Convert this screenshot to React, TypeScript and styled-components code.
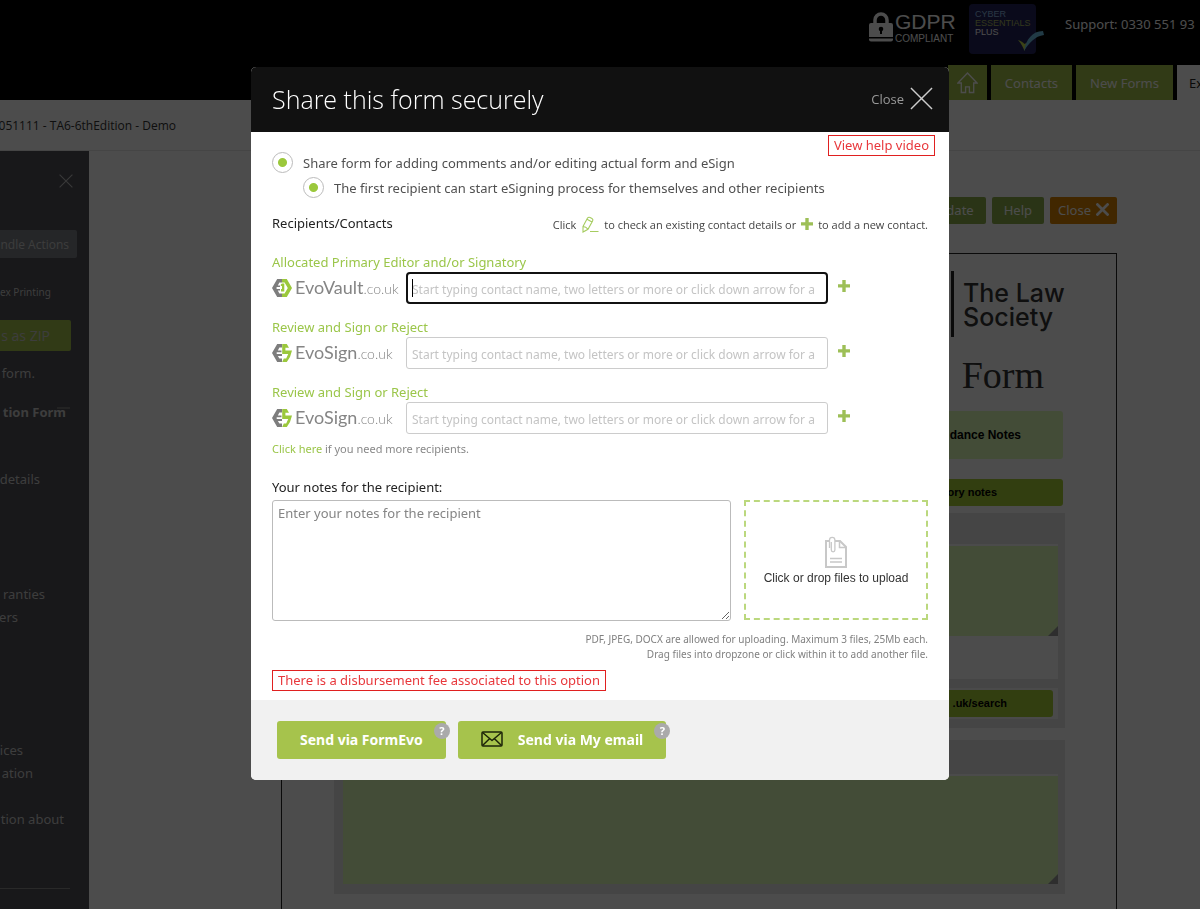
import React from "react";
import styled, { createGlobalStyle, css } from "styled-components";

const green = "#a6c34c";
const arial = '"Liberation Sans", Arial, sans-serif';
const openSans = '"Open Sans", "Noto Sans", sans-serif';

const GlobalStyle = createGlobalStyle`
  *, *::before, *::after { box-sizing: border-box; }
  body { margin: 0; background: #fff; font-family: "Noto Sans", "Open Sans", sans-serif; font-size: 13px; color: #505050; }
  button, input, textarea { font-family: inherit; }
  button { cursor: pointer; }
  a { text-decoration: none; }
`;

/* ---------- Page behind the dialog ---------- */

const Page = styled.div`
  height: 100vh;
  overflow: hidden;
  display: flex;
  flex-direction: column;
`;

const TopBar = styled.header`
  flex: none;
  height: 100px;
  background: #000;
  display: flex;
  flex-direction: column;
  justify-content: space-between;
`;

const BadgeRow = styled.div`
  display: flex;
  justify-content: flex-end;
  align-items: flex-start;
  padding-top: 4px;
`;

const Gdpr = styled.div`
  display: flex;
  align-items: center;
  gap: 2px;
  width: 100px;
  height: 46px;
  color: #fff;
  font-family: ${arial};
`;

const GdprText = styled.div`
  font-size: 21px;
  line-height: 23px;
`;

const GdprSub = styled.div`
  font-size: 10px;
  line-height: 11px;
`;

const Cyber = styled.div`
  position: relative;
  width: 67px;
  height: 50px;
  margin-right: 29px;
  padding: 6px;
  border-radius: 4px;
  background: #24245c;
  font: 9px/9px ${arial};
  white-space: nowrap;
  svg { position: absolute; right: -8px; bottom: 2px; }
`;

const CyberLine = styled.div<{ $color: string }>`
  color: ${(p) => p.$color};
`;

const Support = styled.div`
  width: 135px;
  overflow: hidden;
  white-space: nowrap;
  line-height: 40px;
  color: #fff;
`;

const Nav = styled.nav`
  display: flex;
  justify-content: flex-end;
  gap: 4px;
`;

const Tab = styled.a<{ $active?: boolean }>`
  display: flex;
  align-items: center;
  height: 35px;
  padding: 0 14px;
  white-space: nowrap;
  background: ${green};
  color: #fff;
  ${(p) => p.$active && css`width: 23px; padding: 0 0 0 12px; overflow: hidden; background: #fff; color: #222;`}
`;

const HomeTab = styled(Tab)`
  padding: 0 9px;
`;

const CrumbBar = styled.div`
  flex: none;
  height: 51px;
  border-bottom: 1px solid #e8e8e8;
`;

const Crumb = styled.div`
  display: flex;
  justify-content: flex-end;
  width: 176px;
  overflow: hidden;
  white-space: nowrap;
  font-family: ${openSans};
  font-size: 12px;
  line-height: 51px;
  color: #333;
`;

const Columns = styled.div`
  flex: 1;
  min-height: 0;
  display: flex;
`;

const Sidebar = styled.aside`
  flex: none;
  width: 89px;
  background: #505057;
  color: #ccc;
  overflow: hidden;
  white-space: nowrap;
  display: flex;
  flex-direction: column;
  align-items: flex-start;
`;

const SideClose = styled.button`
  margin: 23px 0 0 59px;
  padding: 0;
  border: 0;
  background: none;
  height: 16px;
`;

const SideButton = styled.button<{ $green?: boolean }>`
  border: 0;
  border-radius: 0 2px 2px 0;
  padding: 0 8px 0 0;
  color: #ccc;
  text-align: right;
  font-family: ${openSans};
  ${(p) =>
    p.$green
      ? css`width: 71px; height: 31px; padding-right: 21px; font-size: 14px; background: ${green};`
      : css`width: 77px; height: 28px; margin-top: 40px; font-size: 12px; background: #7d8187;`}
`;

const SideSmall = styled.div`
  font-size: 10px;
  line-height: 20px;
  margin: 24px 0 18px;
`;

const SideText = styled.div<{ $end: number; $gap?: number; $bold?: boolean }>`
  display: flex;
  justify-content: flex-end;
  width: ${(p) => p.$end}px;
  line-height: 23px;
  margin-top: ${(p) => p.$gap || 0}px;
  font-weight: ${(p) => (p.$bold ? 700 : 400)};
`;

const Minus = styled.span`
  position: absolute;
  left: 57px;
  top: 407px;
  width: 13px;
  height: 2px;
  background: #777;
`;

const SideRule = styled.hr`
  width: 70px;
  margin: 57px 0 8px;
  border: 0;
  border-top: 1px solid #8a8a8a;
`;

const Content = styled.main`
  flex: 1;
  min-width: 0;
  padding: 46px 83px 0 192px;
`;

const Tools = styled.div`
  display: flex;
  justify-content: flex-end;
  gap: 6px;
  margin-bottom: 29px;
`;

const Tool = styled.button<{ $warn?: boolean }>`
  display: flex;
  align-items: center;
  gap: 5px;
  height: 27px;
  padding: 0 ${(p) => (p.$warn ? 8 : 12)}px 2px;
  border: 0;
  border-radius: 2px;
  font-size: 13px;
  color: #fff;
  background: ${(p) => (p.$warn ? "#d98200" : "#8db04c")};
`;

const Sheet = styled.section`
  min-height: 900px;
  padding: 17px 51px 0 52px;
  border: 1px solid #222;
`;

const Society = styled.div`
  display: flex;
  justify-content: flex-end;
`;

const SocietyName = styled.div`
  width: 114px;
  padding: 10px 0 8px 9px;
  border-left: 3px solid #222;
  font: 500 25px/24px Inter, Lato, sans-serif;
  white-space: nowrap;
  color: #333;
`;

const FormTitle = styled.h2`
  margin: 13px 21px 11px 0;
  text-align: right;
  font: 400 38px/50px "Liberation Serif", serif;
  color: #333;
`;

const Guidance = styled.div`
  margin: 0 2px 20px 0;
  padding-right: 42px;
  border-radius: 3px;
  background: #dffdba;
  text-align: right;
  font: 700 12px/48px ${arial};
  color: #000;
`;

const GreenBar = styled.div<{ $pad: number }>`
  margin-right: 2px;
  padding-right: ${(p) => p.$pad}px;
  border-radius: 3px;
  background: #a9d038;
  text-align: right;
  font: 700 11px/27px ${arial};
  color: #000;
`;

const Panel = styled.div<{ $last?: boolean }>`
  margin-top: ${(p) => (p.$last ? 12 : 7)}px;
  padding: ${(p) => (p.$last ? "34px 7px 10px 9px" : "31px 7px 9px 9px")};
  background: #e6e6e6;
`;

const Field = styled.div<{ $h: number }>`
  position: relative;
  height: ${(p) => p.$h}px;
  border-top: 2px solid #fbfbfb;
  textarea {
    display: block;
    width: 100%;
    height: 100%;
    border: 0;
    resize: none;
    background: #dffdba;
  }
  &::after {
    content: "";
    position: absolute;
    right: 0;
    bottom: 0;
    border: 5px solid transparent;
    border-right-color: #999;
    border-bottom-color: #999;
  }
`;

const Blank = styled.div`
  height: 43px;
  margin-bottom: 9px;
  background: #fff;
`;

const LinkBox = styled.div`
  padding: 2px 3px;
  background: #f8f8f8;
`;

/* ---------- Dialog ---------- */

const Overlay = styled.div`
  position: fixed;
  inset: 0;
  padding: 67px 16px 0;
  display: flex;
  justify-content: center;
  align-items: flex-start;
  background: rgba(0, 0, 0, 0.7);
`;

const Dialog = styled.section`
  width: 100%;
  max-width: 698px;
  border-radius: 5px;
  overflow: hidden;
  background: #fff;
`;

const DialogHead = styled.header`
  display: flex;
  justify-content: space-between;
  align-items: center;
  height: 65px;
  padding: 0 16px 2px 21px;
  background: #111;
`;

const Title = styled.h1`
  margin: 0;
  font-family: ${openSans};
  font-size: 25px;
  font-weight: 300;
  color: #fff;
`;

const CloseButton = styled.button`
  display: flex;
  align-items: center;
  gap: 6px;
  padding: 0;
  border: 0;
  background: none;
  font-family: ${openSans};
  font-size: 13px;
  color: #999;
`;

const Body = styled.div`
  padding: 3px 21px 9px;
`;

const OptionRow = styled.div`
  display: flex;
  justify-content: space-between;
  align-items: flex-start;
  margin-right: -7px;
`;

const Boxed = styled.span`
  display: inline-block;
  padding: 0 5px;
  border: 1px solid #e02020;
  font-size: 13px;
  line-height: 19px;
  color: #e8383c;
`;

const Option = styled.label<{ $nested?: boolean }>`
  display: flex;
  align-items: center;
  gap: 10px;
  height: 21px;
  margin: ${(p) => (p.$nested ? "4px 0 0 31px" : "17px 0 0")};
  input {
    appearance: none;
    flex: none;
    width: 21px;
    height: 21px;
    margin: 0;
    border: 1px solid #bbb;
    border-radius: 50%;
    background: radial-gradient(circle, #9bc83c 4px, #fff 5px);
  }
`;

const ContactsHead = styled.div`
  display: flex;
  justify-content: space-between;
  align-items: center;
  height: 20px;
  margin: 15px 0 20px;
  color: #222;
`;

const Hint = styled.span`
  display: flex;
  align-items: center;
  gap: 5px;
  padding-top: 2px;
  font-family: ${openSans};
  font-size: 11px;
  color: #444;
`;

const Recipient = styled.div`
  margin-bottom: 14px;
`;

const RecipientLabel = styled.label`
  display: block;
  line-height: 19px;
  color: #9bc64a;
`;

const RecipientRow = styled.div`
  display: grid;
  grid-template-columns: 126px minmax(0, 422px) 14px;
  column-gap: 8px;
  align-items: center;
`;

const Brand = styled.span`
  display: flex;
  align-items: center;
  gap: 3px;
  white-space: nowrap;
  svg { flex: none; }
`;

const BrandName = styled.span`
  font: 400 18px/24px Lato, sans-serif;
  color: #858585;
  small { font-size: 14px; font-weight: 300; }
`;

const InputWrap = styled.span<{ $active?: boolean }>`
  position: relative;
  display: block;
  height: 32px;
  ${(p) =>
    p.$active &&
    css`
      &::before {
        content: "";
        position: absolute;
        left: 6px;
        top: 7px;
        width: 1px;
        height: 18px;
        background: #000;
      }
      input { outline: 2px solid #111; outline-offset: -2px; border-radius: 4px; }
    `}
`;

const TextInput = styled.input`
  display: block;
  width: 100%;
  height: 32px;
  padding: 2px 2px 0 5px;
  border: 1px solid #ccc;
  border-radius: 3px;
  font-size: 12px;
  color: #333;
  &::placeholder { color: #c4c4c4; opacity: 1; }
`;

const AddButton = styled.button`
  display: flex;
  padding: 0 0 4px 2px;
  border: 0;
  background: none;
`;

const More = styled.p`
  margin: -7px 0 21px;
  font-size: 11px;
  line-height: 16px;
  color: #888;
  a { color: #9bc64a; }
`;

const NotesLabel = styled.label`
  display: block;
  line-height: 18px;
  margin-bottom: 4px;
  color: #222;
`;

const NotesRow = styled.div`
  display: grid;
  grid-template-columns: minmax(0, 1fr) 184px;
  column-gap: 13px;
`;

const Notes = styled.textarea`
  display: block;
  width: 100%;
  height: 121px;
  padding: 3px 5px;
  border: 1px solid #bbb;
  border-radius: 3px;
  font-size: 13px;
  &::placeholder { color: #858585; opacity: 1; }
`;

const Drop = styled.button`
  display: flex;
  flex-direction: column;
  align-items: center;
  justify-content: center;
  gap: 1px;
  height: 120px;
  padding: 8px 0 6px;
  border: 2px dashed #bbd87e;
  background: #fff;
  font: 12px/18px ${arial};
  color: #333;
`;

const Rules = styled.p`
  margin: 11px 0 8px;
  text-align: right;
  font-size: 10px;
  line-height: 15px;
  color: #808080;
`;

const Foot = styled.footer`
  display: flex;
  gap: 12px;
  height: 80px;
  padding: 21px 26px;
  background: #f1f1f1;
`;

const Send = styled.button`
  position: relative;
  display: flex;
  align-items: center;
  gap: 15px;
  height: 38px;
  padding: 0 23px 2px;
  border: 0;
  border-radius: 3px;
  background: ${green};
  font-size: 14px;
  font-weight: 700;
  color: #fff;
`;

const Tip = styled.span`
  position: absolute;
  top: 2px;
  right: -4px;
  width: 16px;
  height: 16px;
  border-radius: 50%;
  background: #aaa;
  font-size: 11px;
  line-height: 16px;
  text-align: center;
`;

/* ---------- Drawings ---------- */

const Cross = ({ size, color, width }: { size: number; color: string; width: number }) => (
  <svg width={size} height={size} viewBox="0 0 24 24" fill="none" stroke={color} strokeWidth={width}>
    <path d="M1 1 23 23M23 1 1 23" />
  </svg>
);

const Plus = () => (
  <svg width="12" height="12" viewBox="0 0 12 12" fill="#9dbf57">
    <path d="M4.300 0h3.400v4.300H12v3.200H7.700V12H4.300V7.500H0V4.300h4.300z" />
  </svg>
);

const Pencil = () => (
  <svg width="18" height="17" viewBox="0 0 18 17" fill="none" stroke="#a6cc60" strokeWidth="1.100">
    <path d="M2 10.500 6.500 2Q7.500.8 9 1.400l2 1.100q1.400 1 .7 2.300L7 13.300 2 16zM2 10.500q3 0 5 2.800M6 3.200l5 2.800" />
    <path d="M9 15.500h8.500" />
  </svg>
);

const HexVault = () => (
  <svg width="20" height="20" viewBox="0 0 20 20">
    <path fill="#7d7d7d" d="M5.200 1H10v3.600H7.400L5.800 7.400H8V9H4.600v2H8v1.600H5.800l1.600 2.800H10V19H5.200L0 10z" />
    <path fill="#9bc83c" d="M10 1h4.800L20 10l-5.200 9H10v-3.600h2.600l3.200-5.400-3.200-5.400H10z" />
    <path fill="#9bc83c" d="M8.800 6.500 10 5.500h2.300v8H9V11h1V8H8.800z" />
  </svg>
);

const HexSign = () => (
  <svg width="20" height="20" viewBox="0 0 20 20">
    <path fill="#7d7d7d" d="M5.200 1H10v3.600H7.400L5.800 7.600H9.500v1.600H4.700v1.800H10v2H5.900l1.500 2.500H10V19H5.200L0 10z" />
    <path fill="#9bc83c" d="M10.200 1h4.600l2.200 3.800h-3.600v2.800H20l-2 6.400-3.200 5h-4.600l1.600-3.600h2.400l2-4.400h-6z" />
  </svg>
);

const Doc = () => (
  <svg width="22" height="32" viewBox="0 0 22 32" fill="none" stroke="#c8c8c8" strokeWidth="2">
    <path d="M10 5h5l6 6v20H1V5h3" />
    <path d="M14.500 5v6.500H21" strokeWidth="1.500" />
    <path d="M4.500 12V4a2.700 2.700 0 0 1 5.400 0v10a1.800 1.800 0 0 1-3.600 0V6" strokeWidth="1.300" />
    <path d="M5 22.500h12M5 26h12" strokeWidth="1.500" />
  </svg>
);

const Envelope = () => (
  <svg width="22" height="16" viewBox="0 0 22 16" fill="none" stroke="#1c2408" strokeWidth="1.500" strokeLinejoin="round">
    <rect x="1" y="1" width="20" height="14" rx="1" />
    <path d="m1.500 1.500 9.500 8 9.500-8M1.500 14.500l7-6.800M20.500 14.500l-7-6.800" />
  </svg>
);

const Lock = () => (
  <svg width="24" height="30" viewBox="0 0 24 30" fill="none">
    <path d="M6 12V8a6 6 0 0 1 12 0v4" stroke="#fff" strokeWidth="3.500" />
    <path d="M2 11h20a2 2 0 0 1 2 2v12H0V13a2 2 0 0 1 2-2z" fill="#fff" />
    <path d="M0 26.500h24v1a2 2 0 0 1-2 2H2a2 2 0 0 1-2-2z" fill="#fff" />
    <circle cx="12" cy="17" r="2.300" fill="#000" />
    <path d="M11 17h2v5h-2z" fill="#000" />
  </svg>
);

const Tick = () => (
  <svg width="26" height="22" viewBox="0 0 26 22">
    <path fill="#c5dc4c" d="M0 10c3 1 5 2 6.500 4L9 12.500 6.500 21C5 17 3 13 0 10z" />
    <path fill="#6fc4e8" d="M6 21C8 10 14 1 25 1l1 4C17 6 11 13 6 21z" />
  </svg>
);

const Home = () => (
  <svg width="21" height="23" viewBox="0 0 22 23" fill="none" stroke="#fff" strokeWidth="1.400">
    <path d="M1 12 11 1.500 21 12h-3.500v10H13v-6H9v6H4.500V12z" />
  </svg>
);

/* ---------- Data ---------- */

const recipients = [
  { id: "editor", label: "Allocated Primary Editor and/or Signatory", brand: "EvoVault", active: true },
  { id: "signer-one", label: "Review and Sign or Reject", brand: "EvoSign", active: false },
  { id: "signer-two", label: "Review and Sign or Reject", brand: "EvoSign", active: false },
];

const Backdrop = () => (
  <Page>
    <TopBar>
      <BadgeRow>
        <Gdpr>
          <Lock />
          <div>
            <GdprText>GDPR</GdprText>
            <GdprSub>COMPLIANT</GdprSub>
          </div>
        </Gdpr>
        <Cyber>
          <CyberLine $color="#8fb8e0">CYBER</CyberLine>
          <CyberLine $color="#a9b860">ESSENTIALS</CyberLine>
          <CyberLine $color="#ffffff">PLUS</CyberLine>
          <Tick />
        </Cyber>
        <Support>Support: 0330 551 93</Support>
      </BadgeRow>
      <Nav>
        <HomeTab href="#home" aria-label="Home"><Home /></HomeTab>
        <Tab href="#contacts">Contacts</Tab>
        <Tab href="#new">New Forms</Tab>
        <Tab href="#existing" $active>Ex</Tab>
      </Nav>
    </TopBar>
    <CrumbBar>
      <Crumb>051111 - TA6-6thEdition - Demo</Crumb>
    </CrumbBar>
    <Columns>
      <Sidebar>
        <SideClose aria-label="Close panel"><Cross size={14} color="#bbb" width={2} /></SideClose>
        <SideButton>ndle Actions</SideButton>
        <SideSmall>ex Printing</SideSmall>
        <SideButton $green>s as ZIP</SideButton>
        <SideText $end={35} $gap={11}>form.</SideText>
        <SideText $end={66} $gap={16} $bold>tion Form</SideText>
        <Minus />
        <SideText $end={40} $gap={44}>details</SideText>
        <SideText $end={45} $gap={92}>ranties</SideText>
        <SideText $end={18}>ers</SideText>
        <SideText $end={23} $gap={110}>ices</SideText>
        <SideText $end={33}>ation</SideText>
        <SideText $end={64} $gap={23}>tion about</SideText>
        <SideRule />
      </Sidebar>
      <Content>
        <Tools>
          <Tool>date</Tool>
          <Tool>Help</Tool>
          <Tool $warn>Close <Cross size={13} color="#fff" width={5} /></Tool>
        </Tools>
        <Sheet>
          <Society>
            <SocietyName>The Law<br />Society</SocietyName>
          </Society>
          <FormTitle>Form</FormTitle>
          <Guidance>dance Notes</Guidance>
          <GreenBar $pad={66}>ory notes</GreenBar>
          <Panel>
            <Field $h={92}><textarea aria-label="Property address" readOnly /></Field>
            <Blank />
            <LinkBox><GreenBar $pad={46}>.uk/search</GreenBar></LinkBox>
          </Panel>
          <Panel $last>
            <Field $h={110}><textarea aria-label="Seller names" readOnly /></Field>
          </Panel>
        </Sheet>
      </Content>
    </Columns>
  </Page>
);

export default function App() {
  return (
    <>
      <GlobalStyle />
      <Backdrop />
      <Overlay>
        <Dialog role="dialog" aria-labelledby="share-title">
          <DialogHead>
            <Title id="share-title">Share this form securely</Title>
            <CloseButton>Close <Cross size={23} color="#ccc" width={1.5} /></CloseButton>
          </DialogHead>
          <Body>
            <OptionRow>
              <Option><input type="radio" name="mode" defaultChecked />Share form for adding comments and/or editing actual form and eSign</Option>
              <Boxed as="a" href="#video">View help video</Boxed>
            </OptionRow>
            <Option $nested><input type="radio" name="start" defaultChecked />The first recipient can start eSigning process for themselves and other recipients</Option>
            <ContactsHead>
              <span>Recipients/Contacts</span>
              <Hint>Click <Pencil /> to check an existing contact details or <Plus /> to add a new contact.</Hint>
            </ContactsHead>
            {recipients.map((r) => (
              <Recipient key={r.id}>
                <RecipientLabel htmlFor={r.id}>{r.label}</RecipientLabel>
                <RecipientRow>
                  <Brand>
                    {r.active ? <HexVault /> : <HexSign />}
                    <BrandName>{r.brand}<small>.co.uk</small></BrandName>
                  </Brand>
                  <InputWrap $active={r.active}>
                    <TextInput id={r.id} placeholder="Start typing contact name, two letters or more or click down arrow for a" />
                  </InputWrap>
                  <AddButton aria-label="Add contact"><Plus /></AddButton>
                </RecipientRow>
              </Recipient>
            ))}
            <More><a href="#more">Click here</a> if you need more recipients.</More>
            <NotesLabel htmlFor="notes">Your notes for the recipient:</NotesLabel>
            <NotesRow>
              <Notes id="notes" placeholder="Enter your notes for the recipient" />
              <Drop><Doc />Click or drop files to upload</Drop>
            </NotesRow>
            <Rules>
              PDF, JPEG, DOCX are allowed for uploading. Maximum 3 files, 25Mb each.<br />
              Drag files into dropzone or click within it to add another file.
            </Rules>
            <Boxed>There is a disbursement fee associated to this option</Boxed>
          </Body>
          <Foot>
            <Send>Send via FormEvo<Tip>?</Tip></Send>
            <Send><Envelope />Send via My email<Tip>?</Tip></Send>
          </Foot>
        </Dialog>
      </Overlay>
    </>
  );
}
